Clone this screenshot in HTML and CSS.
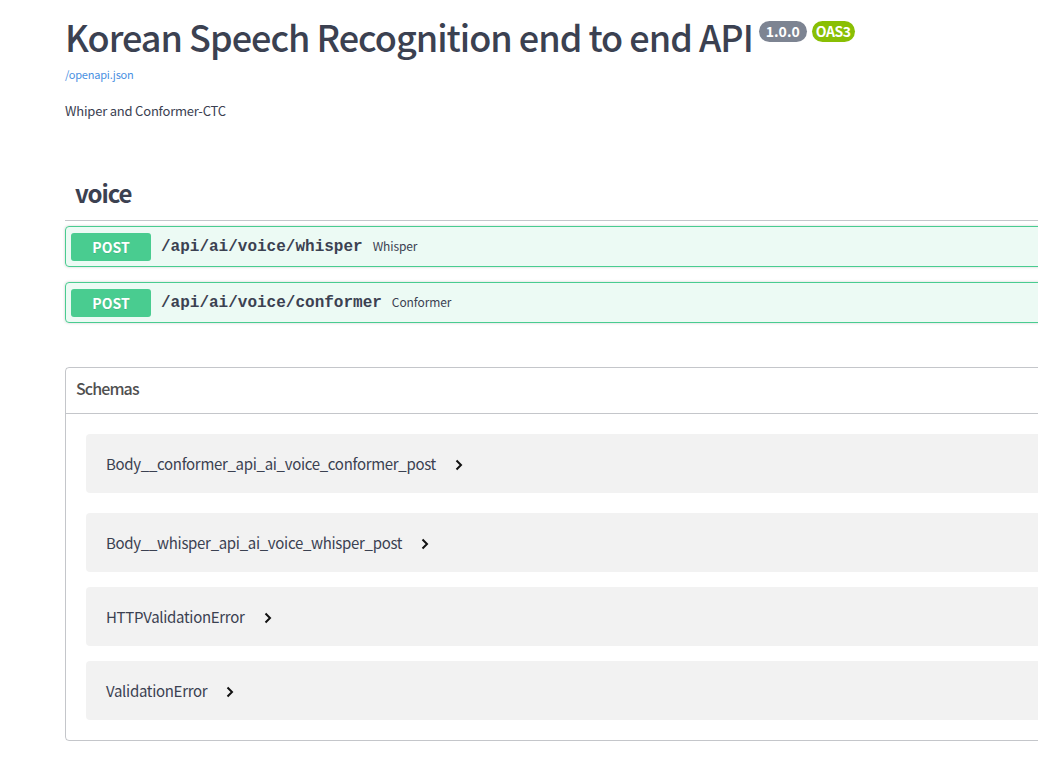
FILE: index.html
```html
<!DOCTYPE html>
<html>
<head>
<meta charset="utf-8">
<link rel="stylesheet" href="styles.css">
</head>
<body>
<div class="wrapper">
  <div class="info">
    <h2 class="title">Korean Speech Recognition end to end API<span class="badges"><span class="badge version">1.0.0</span><span class="badge oas">OAS3</span></span></h2>
    <a class="base-url" href="#">/openapi.json</a>
    <p class="desc">Whiper and Conformer-CTC</p>
  </div>

  <section class="tag">
    <h3 class="tag-title">voice</h3>
    <div class="opblock">
      <span class="method">POST</span>
      <span class="path">/api/ai/voice/whisper</span>
      <span class="summary">Whisper</span>
    </div>
    <div class="opblock">
      <span class="method">POST</span>
      <span class="path">/api/ai/voice/conformer</span>
      <span class="summary">Conformer</span>
    </div>
  </section>

  <section class="models">
    <h4 class="models-title">Schemas</h4>
    <div class="models-body">
      <div class="model first"><span class="model-name">Body__conformer_api_ai_voice_conformer_post</span><svg class="chev" width="8" height="12" viewBox="0 0 8 12"><polyline points="1.5,1.5 6,6 1.5,10.5" fill="none" stroke="#111" stroke-width="2"/></svg></div>
      <div class="model"><span class="model-name">Body__whisper_api_ai_voice_whisper_post</span><svg class="chev" width="8" height="12" viewBox="0 0 8 12"><polyline points="1.5,1.5 6,6 1.5,10.5" fill="none" stroke="#111" stroke-width="2"/></svg></div>
      <div class="model"><span class="model-name">HTTPValidationError</span><svg class="chev" width="8" height="12" viewBox="0 0 8 12"><polyline points="1.5,1.5 6,6 1.5,10.5" fill="none" stroke="#111" stroke-width="2"/></svg></div>
      <div class="model"><span class="model-name">ValidationError</span><svg class="chev" width="8" height="12" viewBox="0 0 8 12"><polyline points="1.5,1.5 6,6 1.5,10.5" fill="none" stroke="#111" stroke-width="2"/></svg></div>
    </div>
  </section>
</div>
</body>
</html>
```
FILE: styles.css
```css
html, body {
  margin: 0;
  padding: 0;
  background: #fff;
  overflow: hidden;
}
body {
  font-family: "Noto Sans CJK KR", "Noto Sans", sans-serif;
  color: #3b4151;
}
.wrapper {
  width: 1100px;
  padding-left: 65px;
  padding-top: 14px;
}
.title {
  margin: 0;
  font-size: 36px;
  line-height: 44px;
  font-weight: 500;
  letter-spacing: -1px;
  color: #3b4151;
  white-space: nowrap;
}
.badges {
  display: inline-flex;
  gap: 5px;
  vertical-align: top;
  margin-left: 6px;
  margin-top: 7px;
  letter-spacing: 0;
}
.badge {
  display: inline-block;
  font-size: 14px;
  line-height: 21px;
  font-weight: 700;
  color: #fff;
  border-radius: 11px;
}
.version { background: #7d8492; padding: 0 7px; }
.oas { background: #89bf04; padding: 0 4px; letter-spacing: -0.4px; }
.base-url {
  display: block;
  margin-top: 8px;
  font-size: 11px;
  line-height: 16px;
  letter-spacing: -0.2px;
  color: #4990e2;
  text-decoration: none;
}
.desc {
  margin: 19px 0 0;
  font-size: 13px;
  line-height: 20px;
  letter-spacing: -0.2px;
  color: #3b4151;
}
.tag {
  margin-top: 56px;
}
.tag-title {
  margin: 0 0 5px;
  padding: 0 10px 11px;
  font-size: 24px;
  line-height: 32px;
  font-weight: 700;
  letter-spacing: -1.1px;
  color: #3b4151;
  border-bottom: 1px solid rgba(59, 65, 81, 0.3);
}
.opblock {
  display: flex;
  align-items: center;
  height: 29px;
  padding: 5px;
  margin-bottom: 15px;
  border: 1px solid #49cc90;
  border-radius: 4px;
  background: rgba(73, 204, 144, 0.1);
  box-shadow: 0 0 3px rgba(0, 0, 0, 0.19);
}
.method {
  width: 80px;
  height: 28px;
  line-height: 28px;
  text-align: center;
  background: #49cc90;
  color: #fff;
  font-size: 14px;
  font-weight: 700;
  border-radius: 3px;
  text-shadow: 0 1px 0 rgba(0, 0, 0, 0.1);
}
.path {
  padding: 0 10px;
  font-family: "Liberation Mono", monospace;
  font-size: 16px;
  font-weight: 700;
  color: #3b4151;
}
.summary {
  font-size: 12px;
  letter-spacing: -0.1px;
  color: #3b4151;
  margin-top: -2px;
}
.models {
  margin-top: 44px;
  border: 1px solid rgba(59, 65, 81, 0.3);
  border-radius: 4px;
}
.models-title {
  margin: 0;
  height: 46px;
  display: flex;
  align-items: center;
  padding: 0 10px 6px;
  box-sizing: border-box;
  font-size: 16px;
  font-weight: 500;
  letter-spacing: -0.9px;
  color: #505050;
  border-bottom: 1px solid rgba(59, 65, 81, 0.3);
}
.models-body {
  display: flex;
  flex-direction: column;
  gap: 15px;
  padding: 20px 0 20px 20px;
}
.model {
  display: flex;
  align-items: center;
  gap: 19px;
  height: 59px;
  padding-left: 20px;
  background: rgba(0, 0, 0, 0.05);
  border-radius: 4px;
}
.model.first {
  margin-bottom: 5px;
}
.model-name {
  font-size: 15px;
  letter-spacing: -0.3px;
  color: #3b4151;
}
.chev {
  margin-top: 3px;
}
```
